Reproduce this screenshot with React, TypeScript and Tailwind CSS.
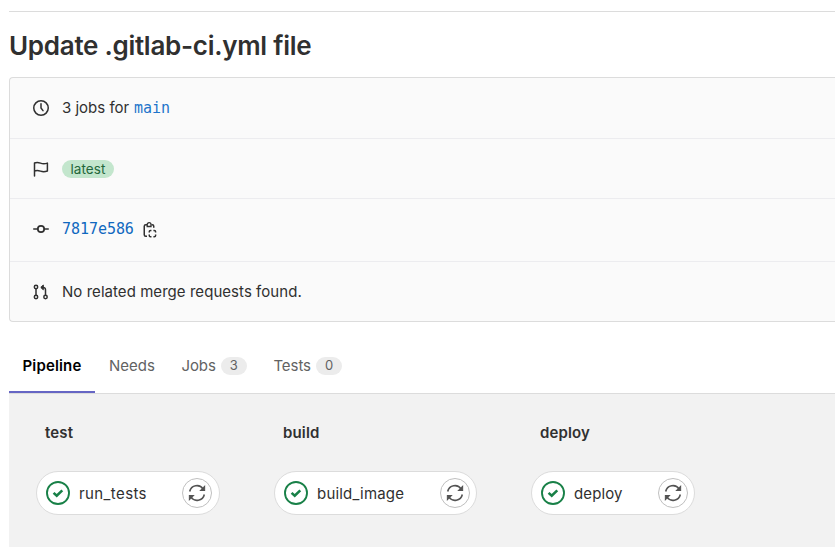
import type { ReactNode } from "react";

const mono = "font-['DejaVu_Sans_Mono',monospace]";

function Icon({ children, className = "size-4" }: { children: ReactNode; className?: string }) {
  return (
    <svg
      viewBox="0 0 16 16"
      className={`shrink-0 ${className}`}
      fill="none"
      stroke="currentColor"
      strokeWidth="1.5"
    >
      {children}
    </svg>
  );
}

const ClockIcon = () => (
  <Icon>
    <circle cx="8" cy="8" r="7.250" />
    <path d="M8 3.750V8l2 2.600" strokeLinecap="round" />
  </Icon>
);

const FlagIcon = () => (
  <Icon>
    <path d="M1.500 15V2c2.200-.9 4-.6 6 .1s4.100.8 6.900 0v7.900c-2.800.9-4.900.8-6.900.1s-3.800-1-6-.1" strokeLinejoin="round" strokeLinecap="round" />
  </Icon>
);

const CommitIcon = () => (
  <Icon>
    <circle cx="8" cy="8" r="3.200" strokeWidth="1.700" />
    <path d="M.75 8h4M11.250 8h4" strokeLinecap="round" />
  </Icon>
);

const MergeRequestIcon = () => (
  <Icon>
    <circle cx="3" cy="3" r="1.700" />
    <circle cx="3" cy="13" r="1.700" />
    <circle cx="12.500" cy="13" r="1.700" />
    <path d="M3 4.600v6.800M12.500 11.400V5.700A2.300 2.300 0 0 0 10.200 3.400H8.200" />
    <path d="M10.300 1 7.800 3.400l2.500 2.400z" fill="currentColor" strokeWidth="1" strokeLinejoin="round" />
  </Icon>
);

const ClipboardIcon = () => (
  <Icon>
    <path d="M5 2.750H3.750a1.500 1.500 0 0 0-1.500 1.500v8.500a1.500 1.500 0 0 0 1.500 1.500H5M9.500 2.750h.75a1.500 1.500 0 0 1 1.500 1.500v1.500" />
    <path d="M5.200 4.500V2.600a1.900 1.900 0 0 1 3.800 0v1.900z" strokeWidth="1.300" />
    <path d="M7.250 10.600V9.700a1.300 1.300 0 0 1 1.300-1.300h.9M11.400 8.400h.9a1.300 1.300 0 0 1 1.300 1.300v.9M13.600 12.500v.9a1.300 1.300 0 0 1-1.300 1.300h-.9M9.450 14.700h-.9a1.300 1.300 0 0 1-1.300-1.300v-.9" />
  </Icon>
);

const SuccessIcon = () => (
  <Icon className="size-6 text-[#188047]">
    <circle cx="8" cy="8" r="7.350" strokeWidth="1.250" />
    <path d="m5.050 7.900 2.100 1.950 3.700-3.600" strokeWidth="1.700" />
  </Icon>
);

const RetryIcon = () => (
  <Icon className="size-[18px] text-[#535353]">
    <path d="M1.500 6.700A6.600 6.600 0 0 1 13.500 4.500M14.500 9.300A6.600 6.600 0 0 1 2.500 11.500" strokeWidth="1.400" />
    <path d="M14.800 2v3.700h-3.700zM1.200 14v-3.700h3.700z" fill="currentColor" strokeWidth="0.900" />
  </Icon>
);

function InfoRow({ icon, className, children }: { icon: ReactNode; className: string; children: ReactNode }) {
  return (
    <div className={`flex items-center gap-[13px] pl-[23px] ${className}`}>
      {icon}
      {children}
    </div>
  );
}

function CountTab({ label, count }: { label: string; count: number }) {
  return (
    <div className="flex items-center gap-[5px]">
      <span className="pt-0.5 tracking-[-0.05px]">{label}</span>
      <span className="mt-px flex h-[18px] w-[26px] items-center justify-center rounded-full bg-[#ececec] pt-px text-[13px]">
        {count}
      </span>
    </div>
  );
}

interface StageProps {
  name: string;
  job: string;
  className: string;
  pillPadding: string;
  jobTracking: string;
}

function Stage({ name, job, className, pillPadding, jobTracking }: StageProps) {
  return (
    <section className={className}>
      <h2 className="pl-[9px] text-[15px] leading-5 font-semibold tracking-[0.15px]">{name}</h2>
      <div className={`mt-[28px] flex h-11 items-center rounded-full border border-[#dcdcdc] bg-white pl-[9px] ${pillPadding}`}>
        <SuccessIcon />
        <span className={`ml-[9px] pt-0.5 text-[15px] leading-5 ${jobTracking}`}>{job}</span>
        <button className="ml-auto flex size-[30px] items-center justify-center rounded-full border border-[#bfbfbf]">
          <RetryIcon />
        </button>
      </div>
    </section>
  );
}

export default function App() {
  return (
    <main className="h-[547px] w-full overflow-hidden bg-white pt-[11px] pl-[9px] font-[Inter,sans-serif] text-[15px] text-[#303030]">
      <div className="border-t border-[#dcdcdc]" />
      <h1 className="mt-[18px] h-8 text-[26px] leading-8 font-semibold tracking-[-0.28px] whitespace-nowrap">
        Update .gitlab-ci.yml file
      </h1>
      <div className="mt-[15px] h-[245px] rounded-l border border-r-0 border-[#dcdcdc] bg-[#fafafa]">
        <InfoRow icon={<ClockIcon />} className="h-[60px]">
          <span>
            3 jobs for <a className={`ml-[0.5px] text-[#1f75cb] ${mono}`}>main</a>
          </span>
        </InfoRow>
        <InfoRow icon={<FlagIcon />} className="h-[60px] border-t border-[#ececef]">
          <span className="flex h-[18px] w-[52px] items-center justify-center rounded-full bg-[#c3e6cd] pt-px text-[13.500px] tracking-[0.1px] text-[#24663b]">
            latest
          </span>
        </InfoRow>
        <InfoRow icon={<CommitIcon />} className="h-[63px] border-t border-[#ececef] pb-0.5">
          <a className={`tracking-[-0.05px] text-[#1068bf] ${mono}`}>7817e586</a>
          <span className="-ml-[5px] pt-0.5">
            <ClipboardIcon />
          </span>
        </InfoRow>
        <InfoRow icon={<MergeRequestIcon />} className="h-[60px] border-t border-[#ececef]">
          <span className="pt-0.5 tracking-[0.05px]">No related merge requests found.</span>
        </InfoRow>
      </div>
      <nav className="mt-[15px] flex h-[57px] border-b border-[#dcdcdc] text-[#626262]">
        <div className="flex w-[86px] items-center justify-center border-b-2 border-[#6666c4] pt-1 font-semibold tracking-[0.15px] text-black">
          Pipeline
        </div>
        <div className="flex gap-[26.500px] pl-[14px]">
          <div className="flex items-center pt-0.5">Needs</div>
          <CountTab label="Jobs" count={3} />
          <CountTab label="Tests" count={0} />
        </div>
      </nav>
      <div className="flex h-[154px] bg-[#f2f2f2] pt-[29px] pl-[27px]">
        <Stage name="test" job="run_tests" className="w-[184px]" pillPadding="pr-[7px]" jobTracking="tracking-[0.4px]" />
        <Stage name="build" job="build_image" className="ml-[54px] w-[203px]" pillPadding="pr-[6px]" jobTracking="tracking-[0.2px]" />
        <Stage name="deploy" job="deploy" className="ml-[54px] w-[164px]" pillPadding="pr-[6px]" jobTracking="tracking-[0.1px]" />
      </div>
    </main>
  );
}
